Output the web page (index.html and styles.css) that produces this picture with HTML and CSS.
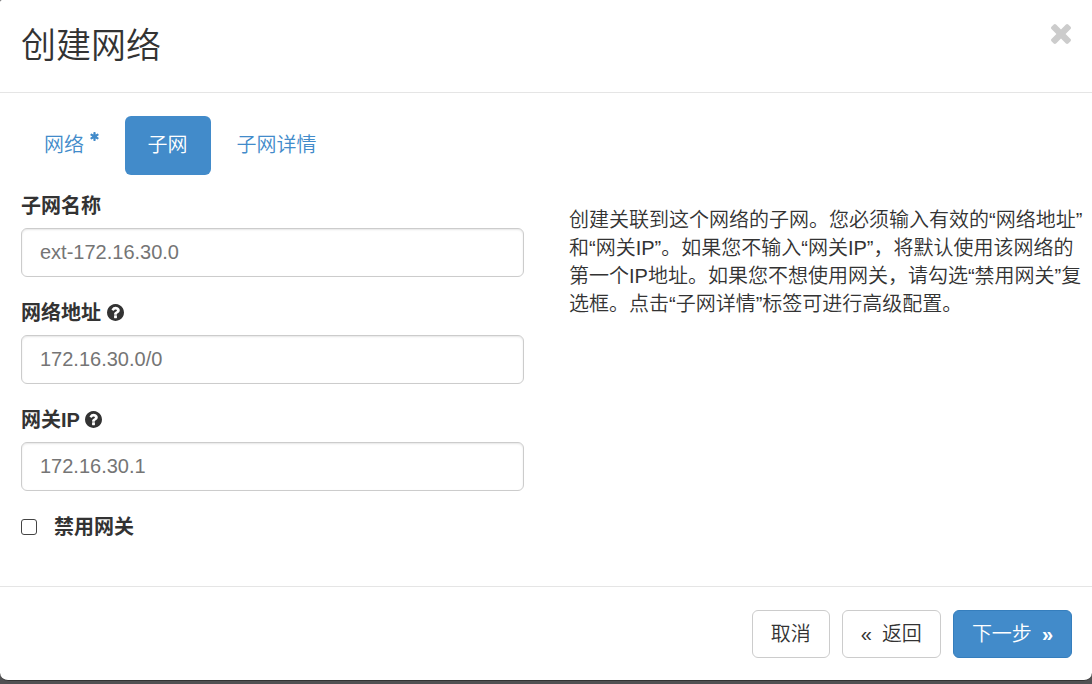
FILE: index.html
```html
<!DOCTYPE html>
<html lang="zh-CN">
<head>
    <meta charset="UTF-8">
    <meta name="viewport" content="width=device-width, initial-scale=1.0">
    <title>创建网络</title>
    <link rel="stylesheet" href="styles.css">
</head>
<body>
    <div class="modal" role="dialog" aria-labelledby="modal-title">
        <div class="modal-header">
            <h1 id="modal-title">创建网络</h1>
            <button type="button" class="close" aria-label="关闭">
                <svg viewBox="302 366 1188 1188"><path d="M1490 1322q0 40-28 68l-136 136q-28 28-68 28t-68-28l-294-294-294 294q-28 28-68 28t-68-28l-136-136q-28-28-28-68t28-68l294-294-294-294q-28-28-28-68t28-68l136-136q28-28 68-28t68 28l294 294 294-294q28-28 68-28t68 28l136 136q28 28 28 68t-28 68l-294 294 294 294q28 28 28 68z"/></svg>
            </button>
        </div>

        <form>
            <div class="modal-body">
                <nav class="tabs">
                    <a href="#network">网络
                        <svg class="required" viewBox="128 128 1536 1536"><path d="M1546 1050q46 26 59.5 77.5t-12.5 97.5l-64 110q-26 46-77.5 59.5t-97.5-12.5l-266-153v307q0 52-38 90t-90 38h-128q-52 0-90-38t-38-90v-307l-266 153q-46 26-97.5 12.5t-77.5-59.5l-64-110q-26-46-12.5-97.5t59.5-77.5l266-154-266-154q-46-26-59.5-77.5t12.5-97.5l64-110q26-46 77.5-59.5t97.5 12.5l266 153v-307q0-52 38-90t90-38h128q52 0 90 38t38 90v307l266-153q46-26 97.5-12.5t77.5 59.5l64 110q26 46 12.5 97.5t-59.5 77.5l-266 154z"/></svg>
                    </a>
                    <a href="#subnet" class="active">子网</a>
                    <a href="#subnet-detail">子网详情</a>
                </nav>

                <div class="columns">
                    <!-- Subnet fields -->
                    <div class="fields">
                        <div class="form-group">
                            <label for="subnet_name">子网名称</label>
                            <input type="text" id="subnet_name" placeholder="ext-172.16.30.0">
                        </div>
                        <div class="form-group">
                            <label for="cidr">网络地址
                                <svg class="help" viewBox="128 128 1536 1536"><path d="M1024 1376v-192q0-14-9-23t-23-9h-192q-14 0-23 9t-9 23v192q0 14 9 23t23 9h192q14 0 23-9t9-23zm256-672q0-88-55.5-163t-138.500-116-170-41q-243 0-371 213-15 24 8 42l132 100q7 6 19 6 16 0 25-12 53-68 86-92 34-24 86-24 48 0 85.500 26t37.500 59q0 38-20 61t-68 45q-63 28-115.500 86.500t-52.500 125.500v36q0 14 9 23t23 9h192q14 0 23-9t9-23q0-19 21.500-49.500t54.500-49.500q32-18 49-28.500t46-35 44.500-48 28-60.500 12.500-81zm384 192q0 209-103 385.500t-279.500 279.500-385.500 103-385.500-103-279.500-279.500-103-385.500 103-385.500 279.500-279.500 385.500-103 385.500 103 279.500 279.500 103 385.500z"/></svg>
                            </label>
                            <input type="text" id="cidr" placeholder="172.16.30.0/0">
                        </div>
                        <div class="form-group">
                            <label for="gateway_ip">网关IP
                                <svg class="help" viewBox="128 128 1536 1536"><path d="M1024 1376v-192q0-14-9-23t-23-9h-192q-14 0-23 9t-9 23v192q0 14 9 23t23 9h192q14 0 23-9t9-23zm256-672q0-88-55.5-163t-138.500-116-170-41q-243 0-371 213-15 24 8 42l132 100q7 6 19 6 16 0 25-12 53-68 86-92 34-24 86-24 48 0 85.500 26t37.500 59q0 38-20 61t-68 45q-63 28-115.500 86.500t-52.500 125.500v36q0 14 9 23t23 9h192q14 0 23-9t9-23q0-19 21.500-49.500t54.500-49.500q32-18 49-28.500t46-35 44.500-48 28-60.500 12.500-81zm384 192q0 209-103 385.500t-279.500 279.500-385.500 103-385.500-103-279.500-279.500-103-385.500 103-385.500 279.500-279.500 385.500-103 385.500 103 279.500 279.500 103 385.500z"/></svg>
                            </label>
                            <input type="text" id="gateway_ip" placeholder="172.16.30.1">
                        </div>
                        <div class="checkbox">
                            <input type="checkbox" id="no_gateway">
                            <label for="no_gateway">禁用网关</label>
                        </div>
                    </div>

                    <p class="help-text">创建关联到这个网络的子网。您必须输入有效的“网络地址”和“网关IP”。如果您不输入“网关IP”，将默认使用该网络的第一个IP地址。如果您不想使用网关，请勾选“禁用网关”复选框。点击“子网详情”标签可进行高级配置。</p>
                </div>
            </div>

            <div class="modal-footer">
                <button type="button" class="btn">取消</button>
                <button type="button" class="btn"><span>«</span>返回</button>
                <button type="submit" class="btn btn-primary">下一步<b>»</b></button>
            </div>
        </form>
    </div>
</body>
</html>
```
FILE: styles.css
```css
* {
    box-sizing: border-box;
}

body {
    margin: 0;
    background-color: #515153;
    color: #333;
    font-family: "Liberation Sans", "Noto Sans CJK SC", sans-serif;
    font-size: 20px;
    font-weight: 350;
    line-height: 28px;
}

.modal {
    background-color: #fff;
    border-bottom: 1px solid #333;
    border-radius: 2px 0 8px 8px;
}

.modal-header {
    display: flex;
    justify-content: space-between;
    align-items: flex-start;
    padding: 21px;
    border-bottom: 1px solid #e5e5e5;
}

h1 {
    margin: 0;
    font-size: 35px;
    line-height: 50px;
    font-weight: inherit;
}

.close {
    padding: 3px 0;
    border: none;
    background: none;
    cursor: pointer;
}

.close svg {
    display: block;
    width: 20px;
    height: 20px;
    fill: #ccc;
}

.modal-body {
    padding: 23px 0 45px;
}

.tabs {
    display: flex;
    gap: 3px;
    padding: 0 21px;
}

.tabs a {
    padding: 15px 23px 16px;
    border-radius: 6px;
    color: #428bca;
    text-decoration: none;
}

.tabs a.active {
    background-color: #428bca;
    color: #fff;
}

.required {
    width: 9px;
    height: 9px;
    vertical-align: 11px;
    fill: #428bca;
}

.columns {
    display: grid;
    grid-template-columns: 1fr 1fr;
    padding-top: 17px;
}

.fields {
    padding: 0 22px 0 21px;
}

.form-group {
    margin-bottom: 22px;
}

label {
    font-weight: bold;
}

.form-group label {
    display: block;
    margin-bottom: 8px;
}

.help {
    width: 17px;
    height: 17px;
    vertical-align: -1px;
    fill: #333;
}

input[type="text"] {
    display: block;
    width: 100%;
    height: 49px;
    padding: 0 18px;
    border: 1px solid #ccc;
    border-radius: 6px;
    box-shadow: inset 0 1px 2px rgba(0, 0, 0, 0.1);
    color: #555;
    font: inherit;
}

input::placeholder {
    color: #757575;
}

.checkbox {
    display: flex;
    align-items: center;
    gap: 17px;
}

.checkbox input {
    appearance: none;
    width: 16px;
    height: 16px;
    margin: 0;
    border: 1px solid #444;
    border-radius: 3px;
    background-color: #fff;
}

.checkbox input:checked {
    background-color: #428bca;
}

.help-text {
    margin: 14px 0 0;
    padding: 0 8px 0 23px;
}

.modal-footer {
    display: flex;
    justify-content: flex-end;
    gap: 12px;
    padding: 23px 20px 22px;
    border-top: 1px solid #e5e5e5;
}

.btn {
    display: flex;
    align-items: center;
    gap: 10px;
    height: 48px;
    padding: 0 18px;
    border: 1px solid #ccc;
    border-radius: 6px;
    background-color: #fff;
    color: #333;
    font: inherit;
    cursor: pointer;
}

.btn-primary {
    border-color: #357ebd;
    background-color: #428bca;
    color: #fff;
}
```
